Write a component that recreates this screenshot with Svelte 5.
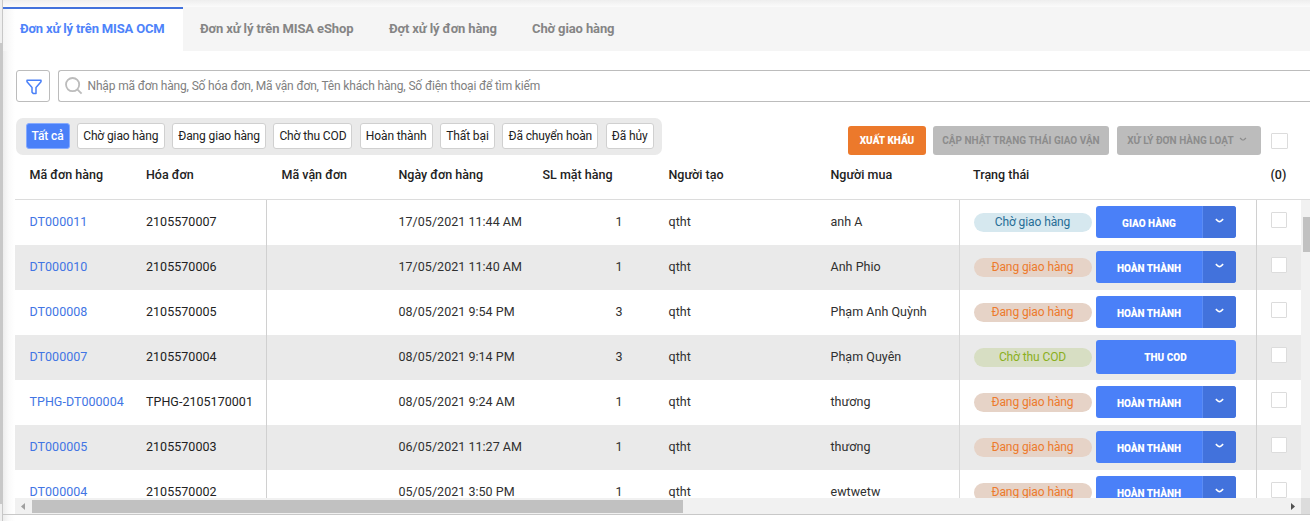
<script>
  const tabs = ['Đơn xử lý trên MISA OCM', 'Đơn xử lý trên MISA eShop', 'Đợt xử lý đơn hàng', 'Chờ giao hàng'];
  const tabWidths = [180, 189, 143, 118];
  const chips = [
    ['Tất cả', 44], ['Chờ giao hàng', 88], ['Đang giao hàng', 94], ['Chờ thu COD', 79],
    ['Hoàn thành', 73], ['Thất bại', 55], ['Đã chuyển hoàn', 96], ['Đã hủy', 48]
  ];
  const columns = ['Mã đơn hàng', 'Hóa đơn', 'Mã vận đơn', 'Ngày đơn hàng', 'SL mặt hàng', 'Người tạo', 'Người mua', 'Trạng thái', '(0)'];
  const waiting = { text: 'Chờ giao hàng', tone: 'blue', action: 'GIAO HÀNG' };
  const shipping = { text: 'Đang giao hàng', tone: 'orange', action: 'HOÀN THÀNH' };
  const cod = { text: 'Chờ thu COD', tone: 'green', action: 'THU COD', single: true };
  const rows = [
    { id: 'DT000011', bill: '2105570007', date: '17/05/2021 11:44 AM', qty: 1, buyer: 'anh A', status: waiting },
    { id: 'DT000010', bill: '2105570006', date: '17/05/2021 11:40 AM', qty: 1, buyer: 'Anh Phio', status: shipping },
    { id: 'DT000008', bill: '2105570005', date: '08/05/2021 9:54 PM', qty: 3, buyer: 'Phạm Anh Quỳnh', status: shipping },
    { id: 'DT000007', bill: '2105570004', date: '08/05/2021 9:14 PM', qty: 3, buyer: 'Phạm Quyên', status: cod },
    { id: 'TPHG-DT000004', bill: 'TPHG-2105170001', date: '08/05/2021 9:24 AM', qty: 1, buyer: 'thương', status: shipping },
    { id: 'DT000005', bill: '2105570003', date: '06/05/2021 11:27 AM', qty: 1, buyer: 'thương', status: shipping },
    { id: 'DT000004', bill: '2105570002', date: '05/05/2021 3:50 PM', qty: 1, buyer: 'ewtwetw', status: shipping }
  ];
</script>

<div class="page">
  <div class="rail"><i class="rail-track"></i><i class="rail-thumb"></i><i class="rail-track"></i></div>
  <main>
    <nav>
      {#each tabs as tab, i}
        <div class="tab" class:active={i === 0} style="width:{tabWidths[i]}px">{tab}</div>
      {/each}
    </nav>

    <div class="search-row">
      <button class="filter" aria-label="Lọc">
        <svg width="16" height="16" viewBox="0 0 16 16"><path d="M1 1.2H15V2.8L10 8.4V14.4H7.2L6 13.2V8.4L1 2.8Z" fill="none" stroke="#4a80f8" stroke-width="1.5" stroke-linejoin="round" /></svg>
      </button>
      <div class="search">
        <svg width="18" height="18" viewBox="0 0 18 18" fill="none" stroke="#bcbcbc" stroke-width="1.8"><circle cx="7.6" cy="7.6" r="6.6" /><path d="M12.3 12.3L16.6 16.6" /></svg>
        <span>Nhập mã đơn hàng, Số hóa đơn, Mã vận đơn, Tên khách hàng, Số điện thoại để tìm kiếm</span>
      </div>
    </div>

    <div class="toolbar">
      <div class="chips">
        {#each chips as [label, width], i}
          <div class="chip" class:on={i === 0} style="width:{width}px">{label}</div>
        {/each}
      </div>
      <div class="actions">
        <div class="act export">XUẤT KHẨU</div>
        <div class="act update">CẬP NHẬT TRẠNG THÁI GIAO VẬN</div>
        <div class="act batch">XỬ LÝ ĐƠN HÀNG LOẠT
          <svg width="8" height="5" viewBox="0 0 8 5"><path d="M1 1L3 2.7Q4 3.3 5 2.7L7 1" fill="none" stroke="#8c8c8c" stroke-width="1.2" /></svg>
        </div>
        <i class="box wide"></i>
      </div>
    </div>

    <div class="head grid">
      {#each columns as column, i}<div class:waybill={i === 2}>{column}</div>{/each}
    </div>

    <div class="body">
      <div class="rows">
        {#each rows as row, i}
          <div class="row grid" class:odd={i % 2}>
            <div class="link">{row.id}</div>
            <div class="bill">{row.bill}</div>
            <div></div>
            <div class="date">{row.date}</div>
            <div class="qty">{row.qty}</div>
            <div>qtht</div>
            <div>{row.buyer}</div>
            <div class="state">
              <span class="pill {row.status.tone}">{row.status.text}</span>
              <span class="btn" class:single={row.status.single}>
                <b>{row.status.action}</b>
                {#if !row.status.single}
                  <em><svg width="9" height="6" viewBox="0 0 9 6"><path d="M.8 1.2L3.4 3.3Q4.5 4 5.6 3.3L8.2 1.2" fill="none" stroke="#fff" stroke-width="1.6" /></svg></em>
                {/if}
              </span>
            </div>
            <div class="check"><i class="box"></i></div>
          </div>
        {/each}
      </div>
      <div class="vbar"><i></i></div>
    </div>
    <div class="hbar">
      <svg width="17" height="16" viewBox="0 0 17 16"><path d="M10 5V12L6 8.5Z" fill="#a0a0a0" /></svg>
      <i class="thumb"></i>
      <span class="gap"></span>
      <svg width="17" height="16" viewBox="0 0 17 16"><path d="M7 5V12L11 8.5Z" fill="#505050" /></svg>
      <i class="corner"></i>
    </div>
    <footer></footer>
  </main>
</div>

<style>
  :global(body) { margin: 0; background: #fff; }
  * { box-sizing: border-box; }
  .page {
    display: flex; width: 1310px; height: 521px; overflow: hidden;
    font: 13px/20px Roboto, sans-serif; color: #303030; white-space: nowrap;
  }
  .rail { width: 3px; display: flex; flex-direction: column; border-right: 1px solid #c8c8c8; flex: none; }
  .rail-track { flex: 1; background: #efefef; }
  .rail-track:first-child { flex: none; height: 43px; }
  .rail-thumb { height: 461px; background: #c8c8c8; }
  main {
    width: 1307px; flex: none; display: flex; flex-direction: column;
    background: linear-gradient(90deg, #ededed 0, #fafafa 6px, #fff 12px);
  }
  nav {
    display: flex; flex: none; height: 51px; padding-top: 7px;
    background: linear-gradient(#eee 0, #fbfbfb 7px, #f5f5f5 7px);
  }
  .tab { padding: 12px 0 0 17px; font-size: 13px; font-weight: 700; color: #858585; letter-spacing: -.12px; }
  .tab.active { background: linear-gradient(90deg, #f4f4f4, #fff 12px); border-top: 2px solid #4272dc; padding-top: 10px; color: #4e83fa; letter-spacing: -.16px; }

  .search-row { display: flex; gap: 8px; flex: none; height: 32px; margin: 19px 0 0 13px; }
  .filter { width: 34px; padding: 1px 0 0 1px; background: #fff; border: 1px solid #bcbcbc; border-radius: 3px; display: grid; place-items: center; }
  .search { flex: 1; display: flex; align-items: center; gap: 4.5px; padding-left: 6px; border: 1px solid #bcbcbc; border-right: 0; border-radius: 3px 0 0 3px; background: #fff; font-size: 12px; letter-spacing: -.155px; color: #808080; }
  .search svg { margin-top: -1px; }

  .toolbar { display: flex; flex: none; height: 37px; margin: 16px 0 0 13px; justify-content: space-between; }
  .chips { display: flex; gap: 7.3px; width: 646px; padding: 5px 0 0 9.5px; background: #eaeaea; border-radius: 7px; }
  .chip { flex: none; height: 26px; line-height: 24px; text-align: center; font-size: 12px; letter-spacing: -.12px; color: #222; background: #fff; border: 1px solid #d0d0d0; border-radius: 3px; }
  .chip.on { background: #4a80f8; color: #fff; border-color: #85aaff; font-weight: 500; }
  .actions { display: flex; padding-top: 8px; width: 462px; }
  .act { height: 29px; line-height: 29px; text-align: center; border-radius: 3px; font-size: 10px; font-weight: 700; background: #bcbcbc; color: #8c8c8c; flex: none; }
  .export { width: 78px; background: #ec792b; color: #fff; font-weight: 900; margin-right: 7px; }
  .update { width: 176px; margin-right: 8px; }
  .batch { width: 144px; margin-right: 10px; padding-right: 4px; }
  .batch svg { margin: 0 0 2px 3px; }
  .box { display: block; width: 16px; height: 16px; background: #fff; border: 1px solid #dcdcdc; border-radius: 1px; }
  .box.wide { width: 17px; margin-top: 7px; }

  .grid { display: grid; grid-template-columns: 116.5px 120.5px 132px 144px 126px 162px 142.5px 297.5px 31px; }
  .head { flex: none; height: 45px; margin-left: 12px; padding: 10px 0 0 14.5px; border-bottom: 1px solid #dcdcdc; font-size: 12.5px; font-weight: 500; color: #222; }
  .waybill { padding-left: 15px; }
  .body { display: flex; flex: none; height: 298px; margin-left: 12px; overflow: hidden; }
  .rows { width: 1286px; flex: none; background: #fff; }
  .row { height: 45px; padding-left: 14.5px; line-height: 44px; font-size: 12.5px; letter-spacing: .03px; }
  .row.odd { background-color: #eaeaea; }
  .row {
    background-image: linear-gradient(#d0d0d0, #d0d0d0), linear-gradient(#d8d8d8, #d8d8d8), linear-gradient(#d0d0d0, #d0d0d0);
    background-size: 1px 100%; background-repeat: no-repeat; background-position: 251px 0, 944px 0, 1241px 0;
  }
  .link { color: #4275e4; }
  .bill { color: #222; }
  .qty { padding-right: 46px; text-align: right; }
  .state { display: flex; gap: 4px; padding-left: .5px; letter-spacing: 0; }
  .pill { width: 118px; height: 19px; margin-top: 13px; border-radius: 10px; line-height: 18px; text-align: center; font-size: 12px; letter-spacing: -.1px; }
  .blue { background: #d6e8ef; color: #276d96; }
  .orange { background: #e6d3c7; color: #ed7a2c; }
  .green { background: #d7dec3; color: #8aaf1d; }
  .btn { display: flex; width: 140px; height: 32px; margin-top: 6px; border-radius: 3px; overflow: hidden; background: #4a80f8; color: #fff; line-height: 35px; }
  .btn b { flex: 1; text-align: center; font-size: 10px; font-weight: 900; padding-left: 1px; }
  .btn em { width: 34px; border-left: 1px solid #5b8cf5; background: #4272dc; display: flex; justify-content: center; padding-top: 12px; }
  .btn.single { height: 34px; margin-top: 5px; line-height: 36px; }
  .btn.single b { padding-left: 0; }
  .check { padding-top: 12px; }
  .vbar { width: 9px; background: #f1f1f1; padding: 17px 0 0 2px; }
  .vbar i { display: block; height: 35px; background: #c1c1c1; }
  .hbar { display: flex; flex: none; height: 16px; margin-left: 12px; background: #f1f1f1; }
  .thumb { width: 651px; height: 13px; margin-top: 2px; background: #c1c1c1; }
  .gap { width: 601px; }
  .corner { width: 9px; height: 16px; background: #dcdcdc; }
  footer { flex: 1; border-top: 1px solid #c8c8c8; }
</style>
